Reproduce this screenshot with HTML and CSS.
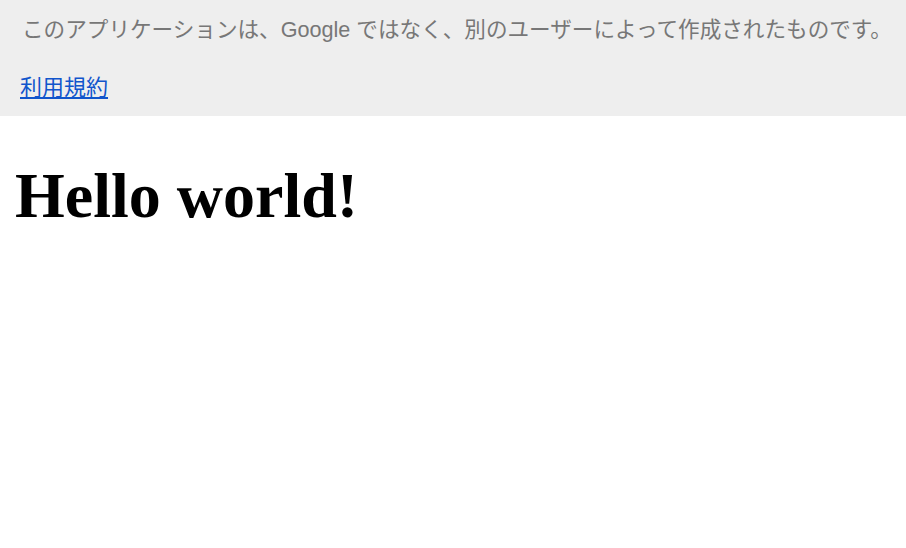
FILE: index.html
```html
<!DOCTYPE html>
<html lang="ja">
<head>
    <meta charset="UTF-8">
    <meta name="viewport" content="width=device-width, initial-scale=1.0">
    <title>Hello</title>
    <link rel="stylesheet" href="styles.css">
</head>
<body>
    <!-- 警告バナー -->
    <div class="warning-bar">
        <div class="warning-text">このアプリケーションは、Google ではなく、別のユーザーによって作成されたものです。</div>
        <div class="warning-links">
            <a href="#">利用規約</a>
        </div>
    </div>

    <div class="content">
        <h1>Hello world!</h1>
    </div>
</body>
</html>
```

FILE: styles.css
```css
body {
    margin: 0;
    font-family: "Liberation Serif", "Times New Roman", serif;
    background: #fff;
    overflow: hidden;
}

.warning-bar {
    background: #eee;
    height: 116px;
    box-sizing: border-box;
    padding: 16px 0 0 22px;
    font-family: "Liberation Sans", Arial, "Noto Sans CJK JP", sans-serif;
    font-size: 22px;
    white-space: nowrap;
}

.warning-text {
    color: #777;
    font-size: 21.6px;
    line-height: 28px;
}

.warning-links {
    margin-top: 30px;
    margin-left: -2px;
    line-height: 28px;
}

.warning-links a {
    color: #15c;
}

.content {
    padding: 0 15px;
}

h1 {
    font-size: 64px;
    font-weight: bold;
    margin: 44px 0 0;
    line-height: 72px;
}
```
